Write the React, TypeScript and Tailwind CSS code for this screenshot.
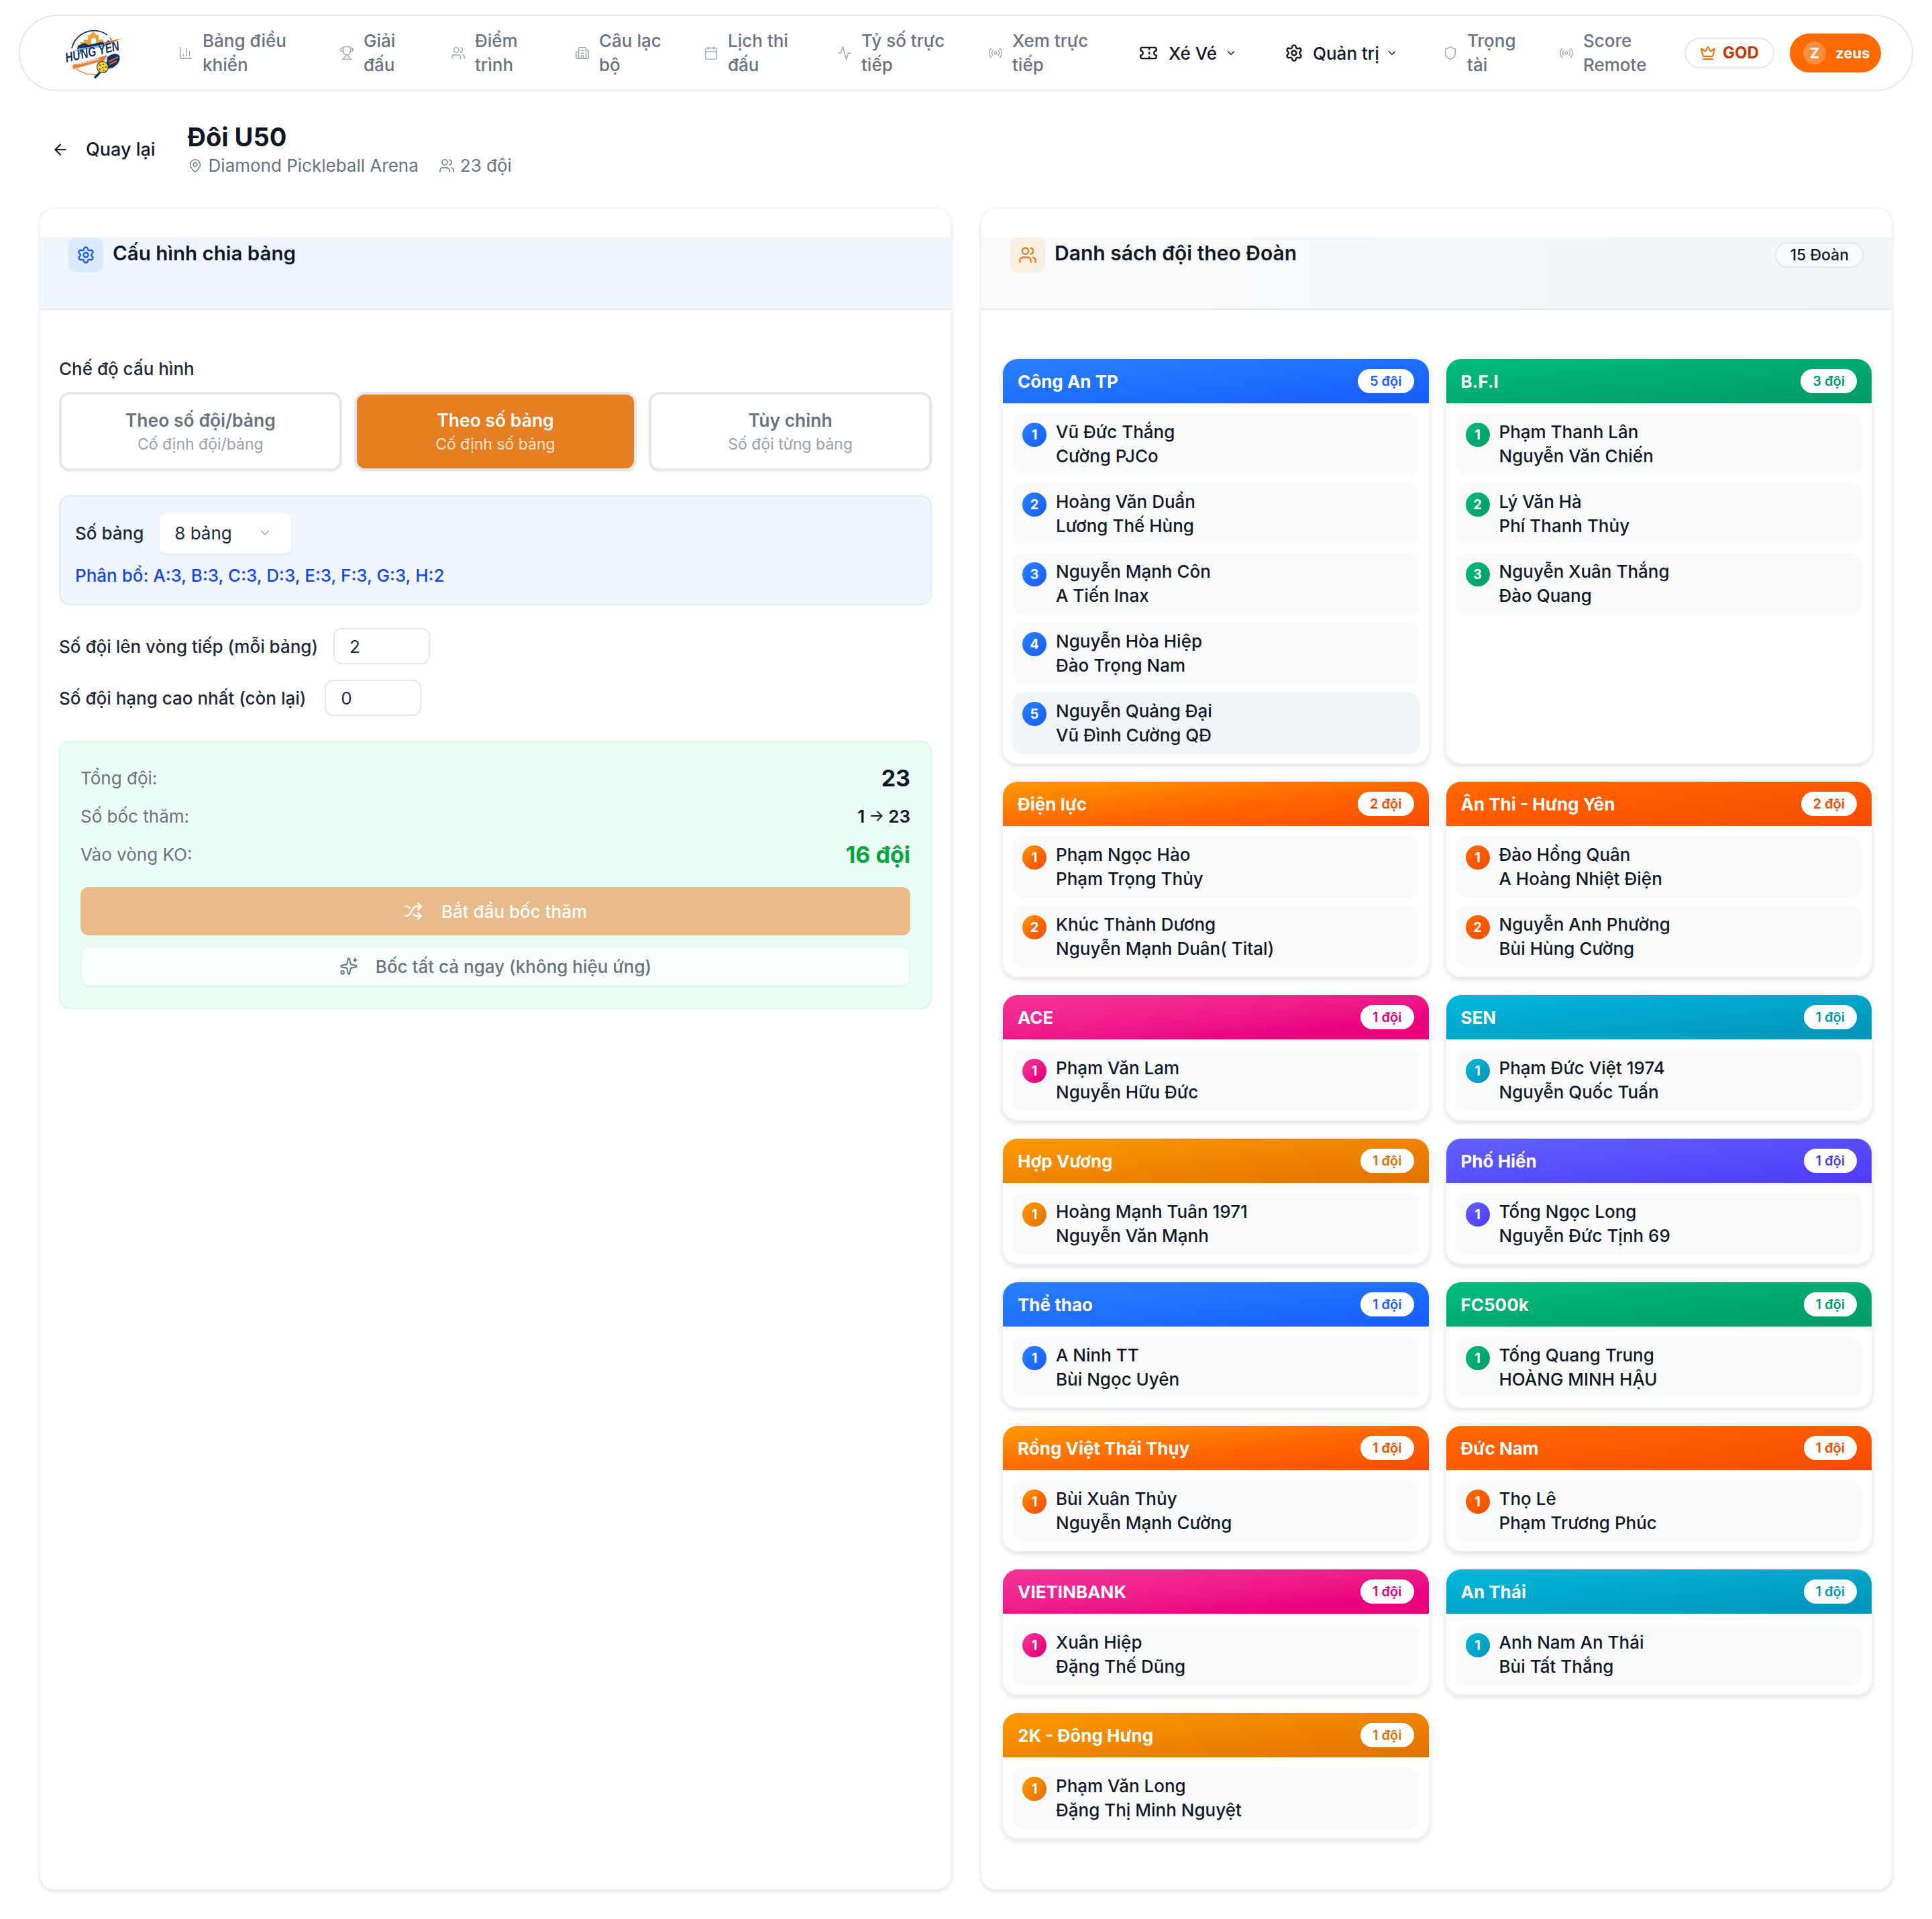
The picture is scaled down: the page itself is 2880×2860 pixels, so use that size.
import {
  Activity,
  ArrowLeft,
  Building2,
  Calendar,
  ChartColumn,
  ChevronDown,
  Crown,
  MapPin,
  Radio,
  Settings,
  Shield,
  Shuffle,
  Sparkles,
  Ticket,
  Trophy,
  Users,
} from "lucide-react";
import type { LucideIcon } from "lucide-react";

const font = { fontFamily: "Inter, 'Noto Sans', sans-serif" };

interface NavEntry {
  icon: LucideIcon;
  label: string;
  width: string;
  text: string;
}

const navLinks: NavEntry[] = [
  { icon: ChartColumn, label: "Bảng điều khiển", width: "w-[240px]", text: "w-[130px]" },
  { icon: Trophy, label: "Giải đấu", width: "w-[166px]", text: "w-[60px]" },
  { icon: Users, label: "Điểm trình", width: "w-[185px]", text: "w-[80px]" },
  { icon: Building2, label: "Câu lạc bộ", width: "w-[192px]", text: "w-[110px]" },
  { icon: Calendar, label: "Lịch thi đấu", width: "w-[199px]", text: "w-[100px]" },
  { icon: Activity, label: "Tỷ số trực tiếp", width: "w-[225px]", text: "w-[140px]" },
  { icon: Radio, label: "Xem trực tiếp", width: "w-[225px]", text: "w-[120px]" },
];

const navLinksEnd: NavEntry[] = [
  { icon: Shield, label: "Trọng tài", width: "w-[173px]", text: "w-[80px]" },
  { icon: Radio, label: "Score Remote", width: "w-[187px]", text: "w-[100px]" },
];

interface Tone {
  gradient: string;
  count: string;
}

const blue: Tone = { gradient: "bg-gradient-to-br from-blue-500 to-blue-600", count: "text-blue-600" };
const green: Tone = { gradient: "bg-gradient-to-br from-emerald-500 to-emerald-600", count: "text-emerald-600" };
const orange: Tone = { gradient: "bg-gradient-to-br from-amber-500 via-orange-500 to-orange-600", count: "text-orange-600" };
const red: Tone = { gradient: "bg-gradient-to-br from-orange-500 to-orange-600", count: "text-orange-600" };
const pink: Tone = { gradient: "bg-gradient-to-br from-pink-500 to-pink-600", count: "text-pink-600" };
const cyan: Tone = { gradient: "bg-gradient-to-br from-cyan-500 to-cyan-600", count: "text-cyan-600" };
const amber: Tone = { gradient: "bg-gradient-to-br from-amber-500 to-amber-600", count: "text-amber-600" };
const indigo: Tone = { gradient: "bg-gradient-to-br from-indigo-500 to-indigo-600", count: "text-indigo-600" };

interface Group {
  name: string;
  tone: Tone;
  teams: [string, string][];
}

const groups: Group[] = [
  {
    name: "Công An TP",
    tone: blue,
    teams: [
      ["Vũ Đức Thắng", "Cường PJCo"],
      ["Hoàng Văn Duẩn", "Lương Thế Hùng"],
      ["Nguyễn Mạnh Côn", "A Tiến Inax"],
      ["Nguyễn Hòa Hiệp", "Đào Trọng Nam"],
      ["Nguyễn Quảng Đại", "Vũ Đình Cường QĐ"],
    ],
  },
  {
    name: "B.F.I",
    tone: green,
    teams: [
      ["Phạm Thanh Lân", "Nguyễn Văn Chiến"],
      ["Lý Văn Hà", "Phí Thanh Thủy"],
      ["Nguyễn Xuân Thắng", "Đào Quang"],
    ],
  },
  {
    name: "Điện lực",
    tone: orange,
    teams: [
      ["Phạm Ngọc Hào", "Phạm Trọng Thủy"],
      ["Khúc Thành Dương", "Nguyễn Mạnh Duân( Tital)"],
    ],
  },
  {
    name: "Ân Thi - Hưng Yên",
    tone: red,
    teams: [
      ["Đào Hồng Quân", "A Hoàng Nhiệt Điện"],
      ["Nguyễn Anh Phường", "Bùi Hùng Cường"],
    ],
  },
  { name: "ACE", tone: pink, teams: [["Phạm Văn Lam", "Nguyễn Hữu Đức"]] },
  { name: "SEN", tone: cyan, teams: [["Phạm Đức Việt 1974", "Nguyễn Quốc Tuấn"]] },
  { name: "Hợp Vương", tone: amber, teams: [["Hoàng Mạnh Tuân 1971", "Nguyễn Văn Mạnh"]] },
  { name: "Phố Hiến", tone: indigo, teams: [["Tống Ngọc Long", "Nguyễn Đức Tịnh 69"]] },
  { name: "Thể thao", tone: blue, teams: [["A Ninh TT", "Bùi Ngọc Uyên"]] },
  { name: "FC500k", tone: green, teams: [["Tống Quang Trung", "HOÀNG MINH HẬU"]] },
  { name: "Rồng Việt Thái Thụy", tone: orange, teams: [["Bùi Xuân Thủy", "Nguyễn Mạnh Cường"]] },
  { name: "Đức Nam", tone: red, teams: [["Thọ Lê", "Phạm Trương Phúc"]] },
  { name: "VIETINBANK", tone: pink, teams: [["Xuân Hiệp", "Đặng Thế Dũng"]] },
  { name: "An Thái", tone: cyan, teams: [["Anh Nam An Thái", "Bùi Tất Thắng"]] },
  { name: "2K - Đông Hưng", tone: amber, teams: [["Phạm Văn Long", "Đặng Thị Minh Nguyệt"]] },
];

const Logo = () => (
  <svg className="w-[84px] h-[73px] shrink-0 overflow-visible" viewBox="0 0 84 73" aria-label="Hưng Yên Pickleball">
    <path d="M9 29 A34 34 0 0 1 62 9" fill="none" stroke="#12315c" strokeWidth="1.8" />
    <path d="M66 13 A34 34 0 0 1 70 22" fill="none" stroke="#3f8fd6" strokeWidth="1.5" />
    <path d="M22 25 V20 H27 V16 H33 V9 H36 L41 4 L46 9 H49 V16 H56 V22 Z" fill="#e9a23b" />
    <path d="M38 25 V17 a3.5 3.5 0 0 1 7 0 V24 Z" fill="#fff" />
    <path d="M18 25 L28 21 L34 24 L56 19 L58 24 L17 30 Z" fill="#12315c" />
    <path d="M14 31 L62 22 L60 26 L14 33 Z" fill="#7fb6e6" />
    <path d="M56 20 L84 14 L60 25 Z" fill="#ee7d31" />
    <text
      x="1"
      y="50"
      fontSize="20"
      fontWeight="900"
      fontStyle="italic"
      fill="#12315c"
      fontFamily="Liberation Sans, sans-serif"
      transform="rotate(-13 1 50)"
      textLength="82"
      lengthAdjust="spacingAndGlyphs"
    >
      HƯNG YÊN
    </text>
    <path d="M10 54 L62 39 L58 47 L11 60 Z" fill="#ee7d31" />
    <text
      x="18"
      y="54"
      fontSize="6"
      fontWeight="700"
      fill="#fff"
      fontFamily="Liberation Sans, sans-serif"
      transform="rotate(-15 18 54)"
      textLength="34"
    >
      PICKLEBALL
    </text>
    <path d="M62 42 Q74 33 80 40 Q83 50 70 58 L60 60 Z" fill="#12315c" />
    <path d="M64 49 L78 42 M65 53 L76 48" stroke="#ee7d31" strokeWidth="1.6" />
    <path d="M16 60 Q30 70 46 68" fill="none" stroke="#ee7d31" strokeWidth="1.5" />
    <path d="M50 66 L44 72" stroke="#12315c" strokeWidth="3.5" strokeLinecap="round" />
    <circle cx="55" cy="57" r="8.5" fill="#f4d21f" stroke="#12315c" strokeWidth="1.2" />
    <circle cx="51" cy="54" r="1" fill="#12315c" />
    <circle cx="56" cy="53" r="1" fill="#12315c" />
    <circle cx="60" cy="57" r="1" fill="#12315c" />
    <circle cx="55" cy="58" r="1" fill="#12315c" />
    <circle cx="51" cy="60" r="1" fill="#12315c" />
    <circle cx="57" cy="62" r="1" fill="#12315c" />
  </svg>
);

const NavLink = ({ icon: Icon, label, width, text }: NavEntry) => (
  <a className={`flex items-center gap-[14px] shrink-0 text-gray-500 ${width}`}>
    <Icon className="w-[22px] h-[22px] shrink-0 text-gray-400" strokeWidth={1.5} />
    <span className={`text-[26px] leading-[36px] font-medium ${text}`}>{label}</span>
  </a>
);

const GroupCard = ({ group }: { group: Group }) => (
  <div className="rounded-[24px] bg-white border-2 border-gray-100 shadow-[0_4px_6px_rgba(0,0,0,0.1)] overflow-hidden">
    <div className={`h-[66px] flex items-center justify-between px-[22px] ${group.tone.gradient}`}>
      <span className="text-[26px] font-bold text-white">{group.name}</span>
      <span className={`h-[36px] px-[18px] flex items-center rounded-full bg-white text-[20px] font-semibold ${group.tone.count}`}>
        {group.teams.length} đội
      </span>
    </div>
    <div className="px-[14px] pt-[15px] pb-[13px] flex flex-col gap-[12px]">
      {group.teams.map((team, index) => (
        <div
          key={team[0]}
          className={`h-[92px] rounded-[16px] flex gap-[14px] pl-[15px] pr-[16px] py-[10px] ${
            team[0] === "Nguyễn Quảng Đại" ? "bg-slate-100" : "bg-slate-50"
          }`}
        >
          <span className={`mt-[4px] w-[36px] h-[36px] rounded-full flex items-center justify-center text-white text-[20px] font-bold shrink-0 ${group.tone.gradient}`}>
            {index + 1}
          </span>
          <div className="text-[26px] leading-[36px] font-medium text-gray-900">
            <div>{team[0]}</div>
            <div>{team[1]}</div>
          </div>
        </div>
      ))}
    </div>
  </div>
);

const ModeButton = ({ title, hint, active }: { title: string; hint: string; active?: boolean }) => (
  <button
    type="button"
    className={`h-[118px] rounded-[16px] border-4 flex flex-col items-center justify-center shadow-[0_2px_2px_rgba(0,0,0,0.06)] ${
      active ? "border-gray-200 bg-[#e67e22] text-white" : "border-gray-200 bg-white text-gray-500"
    }`}
  >
    <span className="text-[26.5px] leading-[38px] font-semibold">{title}</span>
    <span className={`text-[23px] leading-[34px] ${active ? "text-white/80" : "text-gray-400"}`}>{hint}</span>
  </button>
);

const NumberRow = ({ label, value, gap }: { label: string; value: string; gap: string }) => (
  <div className={`flex items-center ${gap}`}>
    <span className="text-[26px] font-medium text-gray-800">{label}</span>
    <div className="w-[144px] h-[54px] rounded-[12px] border-2 border-gray-200 bg-white flex items-center pl-[22px] text-[26px] text-gray-800">
      {value}
    </div>
  </div>
);

const PanelHeader = ({ className, children }: { className: string; children: React.ReactNode }) => (
  <div className={`mt-[43px] h-[108px] border-b-2 border-gray-200 flex items-start ${className}`}>{children}</div>
);

export default function App() {
  return (
    <div className="w-[2880px] h-[2860px] bg-white text-gray-900 overflow-hidden" style={font}>
      <nav className="mt-[22px] mx-[28px] h-[114px] rounded-full border-2 border-gray-200 bg-white flex items-center pl-[68px]">
        <Logo />
        <div className="flex items-center ml-[84px]">
          {navLinks.map((link) => (
            <NavLink key={link.label} {...link} />
          ))}
          <a className="flex items-center gap-[16px] w-[217px] shrink-0 text-[26px] font-medium text-gray-900">
            <Ticket className="w-[28px] h-[28px]" strokeWidth={2} />
            <span>Xé Vé</span>
            <ChevronDown className="w-[18px] h-[18px] -ml-[4px]" />
          </a>
          <a className="flex items-center gap-[14px] w-[236px] shrink-0 text-[26px] font-medium text-gray-900">
            <Settings className="w-[28px] h-[28px]" strokeWidth={2} />
            <span>Quản trị</span>
            <ChevronDown className="w-[18px] h-[18px] -ml-[4px]" />
          </a>
          {navLinksEnd.map((link) => (
            <NavLink key={link.label} {...link} />
          ))}
          <div className="w-[134px] h-[46px] rounded-full border-2 border-gray-200 bg-white flex items-center justify-center gap-[10px] text-[24px] font-bold text-orange-700">
            <Crown className="w-[24px] h-[24px] text-orange-500" strokeWidth={2} />
            GOD
          </div>
          <div className="ml-[23px] w-[136px] h-[58px] rounded-full bg-[#ff6900] flex items-center pl-[20px] gap-[14px] text-white text-[22px] font-bold">
            <span className="w-[34px] h-[34px] rounded-full bg-white/25 flex items-center justify-center">Z</span>
            zeus
          </div>
        </div>
      </nav>

      <header className="mt-[27px] ml-[77px] h-[120px] flex items-center">
        <ArrowLeft className="w-[26px] h-[26px]" />
        <span className="ml-[25px] text-[27px] font-medium">Quay lại</span>
        <div className="ml-[48px]">
          <h1 className="text-[38px] leading-[46px] font-bold">Đôi U50</h1>
          <div className="flex items-center mt-[2px] text-[26px] leading-[36px] text-gray-500">
            <MapPin className="w-[22px] h-[24px] mr-[9px]" strokeWidth={1.5} />
            Diamond Pickleball Arena
            <Users className="w-[24px] h-[24px] ml-[30px] mr-[8px]" strokeWidth={1.5} />
            23 đội
          </div>
        </div>
      </header>

      <main className="mt-[26px] ml-[58px] w-[2764px] h-[2508px] grid grid-cols-2 gap-[42px]">
        <section className="rounded-[24px] border-2 border-gray-100 bg-white shadow-[0_3px_4px_rgba(0,0,0,0.1)] overflow-hidden">
          <PanelHeader className="bg-[#eff6ff] pl-[42px]">
            <span className="w-[52px] h-[52px] rounded-[12px] bg-[#dbeafe] flex items-center justify-center">
              <Settings className="w-[28px] h-[28px] text-blue-600" strokeWidth={2} />
            </span>
            <h2 className="ml-[14px] text-[29.5px] leading-[46px] font-semibold">Cấu hình chia bảng</h2>
          </PanelHeader>
          <div className="px-[28px] pt-[68px]">
            <div className="text-[26px] leading-[40px] font-medium text-gray-800">Chế độ cấu hình</div>
            <div className="mt-[14px] grid grid-cols-3 gap-[18px]">
              <ModeButton title="Theo số đội/bảng" hint="Cố định đội/bảng" />
              <ModeButton title="Theo số bảng" hint="Cố định số bảng" active />
              <ModeButton title="Tùy chỉnh" hint="Số đội từng bảng" />
            </div>
            <div className="mt-[36px] h-[164px] rounded-[16px] border-2 border-[#dbeafe] bg-[#eff6ff] px-[22px] pt-[22px]">
              <div className="flex items-center gap-[22px]">
                <span className="text-[26px] font-medium text-gray-800">Số bảng</span>
                <div className="w-[200px] h-[64px] rounded-[12px] border-2 border-gray-100 bg-white flex items-center justify-between pl-[22px] pr-[28px] text-[26px] text-gray-800 shadow-[0_2px_2px_rgba(0,0,0,0.05)]">
                  8 bảng
                  <ChevronDown className="w-[22px] h-[22px] text-gray-400" strokeWidth={1.5} />
                </div>
              </div>
              <div className="mt-[14px] text-[26px] leading-[36px] font-medium text-blue-700">
                Phân bổ: A:3, B:3, C:3, D:3, E:3, F:3, G:3, H:2
              </div>
            </div>
            <div className="mt-[34px] flex flex-col gap-[23px]">
              <NumberRow label="Số đội lên vòng tiếp (mỗi bảng)" value="2" gap="gap-[23px]" />
              <NumberRow label="Số đội hạng cao nhất (còn lại)" value="0" gap="gap-[28px]" />
            </div>
            <div className="mt-[37px] h-[400px] rounded-[16px] border-2 border-[#d0fae5] bg-[#ecfdf5] px-[30px] pt-[30px]">
              <div className="flex items-center justify-between h-[46px] text-[26px] text-gray-500">
                Tổng đội:
                <span className="text-[34px] font-bold text-gray-900">23</span>
              </div>
              <div className="mt-[11px] flex items-center justify-between h-[46px] text-[26px] text-gray-500">
                Số bốc thăm:
                <span className="font-semibold text-gray-900 flex items-center">
                  1<span className="px-[6px] text-[24px] font-normal">→</span>23
                </span>
              </div>
              <div className="mt-[11px] flex items-center justify-between h-[46px] text-[26px] text-gray-500">
                Vào vòng KO:
                <span className="text-[34px] font-bold text-green-600">16 đội</span>
              </div>
              <button
                type="button"
                className="mt-[26px] w-full h-[72px] rounded-[12px] bg-[#e8bc8a] flex items-center justify-center gap-[28px] text-white text-[26px] font-medium"
              >
                <Shuffle className="w-[28px] h-[28px]" strokeWidth={2} />
                Bắt đầu bốc thăm
              </button>
              <button
                type="button"
                className="mt-[16px] w-full h-[60px] rounded-[12px] bg-white/60 border-2 border-[#e8f8ef] shadow-[0_2px_2px_rgba(0,0,0,0.03)] flex items-center justify-center gap-[26px] text-gray-500 text-[26px] font-medium"
              >
                <Sparkles className="w-[28px] h-[28px]" strokeWidth={1.75} />
                Bốc tất cả ngay (không hiệu ứng)
              </button>
            </div>
          </div>
        </section>

        <section className="rounded-[24px] border-2 border-gray-100 bg-white shadow-[0_3px_4px_rgba(0,0,0,0.1)] overflow-hidden">
          <PanelHeader className="bg-gradient-to-r from-gray-50 to-slate-100 justify-between pl-[43px] pr-[42px]">
            <div className="flex items-start">
              <span className="w-[52px] h-[52px] rounded-[12px] bg-[#fbeee2] flex items-center justify-center">
                <Users className="w-[28px] h-[28px] text-[#e67e22]" strokeWidth={2} />
              </span>
              <h2 className="ml-[14px] text-[30px] leading-[46px] font-semibold">Danh sách đội theo Đoàn</h2>
            </div>
            <span className="mt-[7px] h-[38px] px-[20px] flex items-center rounded-full border-2 border-gray-200 bg-gray-50 text-[23px] font-medium">
              15 Đoàn
            </span>
          </PanelHeader>
          <div className="pl-[30px] pr-[28px] pt-[71px] grid grid-cols-2 gap-x-[22px] gap-y-[24px] content-start">
            {groups.map((group) => (
              <GroupCard key={group.name} group={group} />
            ))}
          </div>
        </section>
      </main>
    </div>
  );
}
